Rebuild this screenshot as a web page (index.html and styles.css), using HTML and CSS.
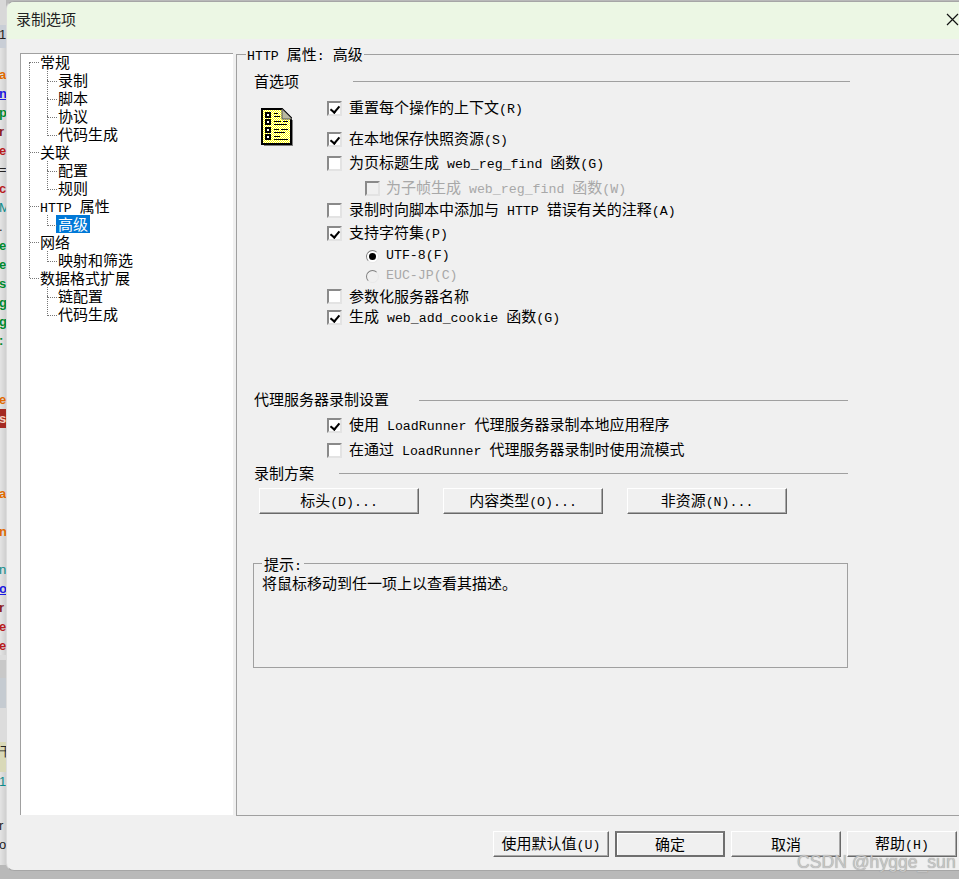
FILE: index.html
```html
<!DOCTYPE html>
<html lang="zh">
<head>
<meta charset="utf-8">
<title>录制选项</title>
<link rel="stylesheet" href="styles.css">
</head>
<body>
<div class="strip">
  <div class="sb sb-top"></div>
  <div class="sb sb-blue"><span class="ch c-dark">1</span></div>
  <div class="sb sp16"></div>
  <div class="ch c-orange">a</div>
  <div class="ch c-blue u">n</div>
  <div class="ch c-green">p</div>
  <div class="ch c-maroon">r</div>
  <div class="ch c-red">e</div>
  <div class="ch c-dark">=</div>
  <div class="ch c-red">c</div>
  <div class="ch c-teal">M</div>
  <div class="ch c-dark">.</div>
  <div class="ch c-green">e</div>
  <div class="ch c-green">e</div>
  <div class="ch c-green">s</div>
  <div class="ch c-green">g</div>
  <div class="ch c-green">g</div>
  <div class="ch c-green">:</div>
  <div class="sb sp40"></div>
  <div class="ch c-orange">e</div>
  <div class="sb sb-red"><span class="ch c-white">s</span></div>
  <div class="sb sp56"></div>
  <div class="ch c-orange">a</div>
  <div class="sb sp19"></div>
  <div class="ch c-orange">n</div>
  <div class="sb sp19"></div>
  <div class="ch c-teal">n</div>
  <div class="ch c-blue u">o</div>
  <div class="ch c-maroon">r</div>
  <div class="ch c-red">e</div>
  <div class="ch c-red">e</div>
  <div class="sb sb-grey"></div>
  <div class="sb sb-steel"></div>
  <div class="sb sb-pale"></div>
  <div class="sb sb-yellow"><span class="ch c-dark">干</span></div>
  <div class="ch c-teal">1</div>
  <div class="sb sp25"></div>
  <div class="ch c-dark">r</div>
  <div class="ch c-dark">o</div>
</div>

<div class="dialog">
  <header class="titlebar">
    <span class="title">录制选项</span>
    <svg class="close" viewBox="0 0 13 13" width="13" height="13"><path d="M1 1 12 12M12 1 1 12" stroke="#111" stroke-width="1.2" fill="none"/></svg>
  </header>

  <div class="content">
    <nav class="tree">
      <div class="node"><div class="label">常规</div>
        <div class="kids">
          <div class="leaf">录制</div><div class="leaf">脚本</div><div class="leaf">协议</div><div class="leaf">代码生成</div>
        </div>
      </div>
      <div class="node"><div class="label">关联</div>
        <div class="kids">
          <div class="leaf">配置</div><div class="leaf">规则</div>
        </div>
      </div>
      <div class="node"><div class="label"><span class="m">HTTP </span>属性</div>
        <div class="kids">
          <div class="leaf"><span class="sel">高级</span></div>
        </div>
      </div>
      <div class="node"><div class="label">网络</div>
        <div class="kids">
          <div class="leaf">映射和筛选</div>
        </div>
      </div>
      <div class="node"><div class="label">数据格式扩展</div>
        <div class="kids">
          <div class="leaf">链配置</div><div class="leaf">代码生成</div>
        </div>
      </div>
    </nav>

    <main class="panel">
      <div class="panel-title"><span class="m">HTTP </span>属性<span class="m">: </span>高级</div>

      <section class="section">
        <div class="head head-pref"><span>首选项</span><i class="rule"></i></div>
        <div class="prefs">
          <svg class="doc" viewBox="0 0 32 38" width="32" height="38">
            <defs>
              <pattern id="dither" width="2" height="2" patternUnits="userSpaceOnUse">
                <rect width="2" height="2" fill="#ffff00"/>
                <rect width="1" height="1" fill="#fff"/>
                <rect x="1" y="1" width="1" height="1" fill="#fff"/>
              </pattern>
            </defs>
            <path d="M1 1H21L30 10V36H1Z" fill="url(#dither)" stroke="#000" stroke-width="2"/>
            <path d="M21 1 31 11H21Z" fill="#b9b9a0" stroke="#555" stroke-width="1"/>
            <path d="M32 12V38H3V37H31V12Z" fill="#808080"/>
            <g fill="#fff" stroke="#000" stroke-width="2">
              <rect x="5" y="5" width="4" height="4"/>
              <rect x="5" y="12" width="4" height="4"/>
              <rect x="5" y="20" width="4" height="4"/>
              <rect x="5" y="27" width="4" height="4"/>
            </g>
            <g stroke="#000" stroke-width="1" fill="none">
              <path d="M13 5.500H17M13 8.500H19M13 13.500H20M22 13.500H27M13 16.500H26M13 21.500H18M20 21.500H27M13 24.500H24M13 28.500H19M13 31.500H27"/>
            </g>
          </svg>
          <div class="opts">
            <label class="row"><i class="box on"></i><span>重置每个操作的上下文<span class="m">(R)</span></span></label>
            <label class="row m11"><i class="box on"></i><span>在本地保存快照资源<span class="m">(S)</span></span></label>
            <label class="row m4"><i class="box"></i><span>为页标题生成<span class="m"> web_reg_find </span>函数<span class="m">(G)</span></span></label>
            <label class="row m5 sub off"><i class="box"></i><span>为子帧生成<span class="m"> web_reg_find </span>函数<span class="m">(W)</span></span></label>
            <label class="row m2"><i class="box"></i><span>录制时向脚本中添加与<span class="m"> HTTP </span>错误有关的注释<span class="m">(A)</span></span></label>
            <label class="row m3"><i class="box on"></i><span>支持字符集<span class="m">(P)</span></span></label>
            <label class="row m3 sub"><i class="radio on"></i><span class="m">UTF-8(F)</span></label>
            <label class="row sub off"><i class="radio"></i><span class="m">EUC-JP(C)</span></label>
            <label class="row"><i class="box"></i><span>参数化服务器名称</span></label>
            <label class="row m1"><i class="box on"></i><span>生成<span class="m"> web_add_cookie </span>函数<span class="m">(G)</span></span></label>
          </div>
        </div>
      </section>

      <section class="section proxy">
        <div class="head head-proxy"><span>代理服务器录制设置</span><i class="rule"></i></div>
        <div class="opts proxy-opts">
          <label class="row"><i class="box on"></i><span>使用<span class="m"> LoadRunner </span>代理服务器录制本地应用程序</span></label>
          <label class="row m5"><i class="box"></i><span>在通过<span class="m"> LoadRunner </span>代理服务器录制时使用流模式</span></label>
        </div>
      </section>

      <section class="section scheme">
        <div class="head head-scheme"><span>录制方案</span><i class="rule"></i></div>
        <div class="btns">
          <button class="btn">标头<span class="m">(D)...</span></button>
          <button class="btn">内容类型<span class="m">(O)...</span></button>
          <button class="btn">非资源<span class="m">(N)...</span></button>
        </div>
      </section>

      <section class="hint">
        <span class="hint-legend">提示<span class="m">:</span></span>
        <p class="hint-text">将鼠标移动到任一项上以查看其描述。</p>
      </section>
    </main>
  </div>

  <footer class="footer">
    <button class="fbtn wide">使用默认值<span class="m">(U)</span></button>
    <button class="fbtn default">确定</button>
    <button class="fbtn">取消</button>
    <button class="fbtn">帮助<span class="m">(H)</span></button>
  </footer>
</div>
<div class="watermark">CSDN @hygge_sun</div>
</body>
</html>
```
FILE: styles.css
```css
* { box-sizing: border-box; }
html, body { margin: 0; height: 879px; overflow: hidden; }
body {
  display: flex;
  align-items: flex-start;
  background: #b9b9b9;
  font-family: "Noto Sans CJK SC", "Liberation Sans", sans-serif;
  font-size: 15px;
  line-height: 18px;
  color: #000;
}
.m { font-family: "Liberation Mono", monospace; font-size: 13.25px; white-space: pre; }

/* Background sliver of the window behind the dialog */
.strip {
  flex: none;
  width: 6px;
  height: 865px;
  background: linear-gradient(90deg, #e4e4e4, #cfcfcf);
  overflow: hidden;
  font-family: "Liberation Sans", sans-serif;
}
.sb { height: 19px; }
.sb-top { height: 25px; background: #d8d8d8; }
.sb-blue { height: 23px; background: #c9ced6; }
.sp16 { height: 17px; }
.sp19 { height: 19px; }
.sp25 { height: 25px; }
.sp40 { height: 40px; }
.sp56 { height: 56px; }
.ch { display: block; height: 19px; margin-left: -1px; font-size: 13px; line-height: 19px; font-weight: 700; white-space: nowrap; }
.c-orange { color: #e06a00; }
.c-blue { color: #1a1ae0; }
.c-green { color: #008a2e; }
.c-maroon { color: #8a1c1c; }
.c-red { color: #b81c1c; }
.c-dark { color: #222; font-weight: 400; }
.c-teal { color: #0b8a8a; font-weight: 400; }
.c-white { color: #f5d0c0; }
.u { text-decoration: underline; }
.sb-red { background: #a52a22; }
.sb-grey { height: 23px; background: linear-gradient(#dcdcdc 20%, #c8c8c8 20%); }
.sb-steel { height: 30px; background: #c5cbd1; }
.sb-pale { height: 34px; background: #dcdcdc; }
.sb-yellow { height: 30px; background: #d9d9b8; }

/* Dialog */
.dialog {
  flex: none;
  width: 960px;
  height: 870px;
  margin-top: 1px;
  display: flex;
  flex-direction: column;
  background: #f0f0f0;
  border: 1px solid #a6a6a6;
  border-right: 0;
  border-left-color: #dcdcdc;
  border-radius: 8px 0 0 8px;
  overflow: hidden;
}
.titlebar {
  flex: none;
  height: 37px;
  padding-left: 9px;
  display: flex;
  align-items: center;
  justify-content: space-between;
  background: #ecf7e4;
  color: #222;
}
.title { margin-top: -3px; }
.close { margin-right: 7px; margin-top: -2px; }

.content {
  flex: none;
  height: 776px;
  display: flex;
  padding: 14px 0 0 13px;
}

/* Tree */
.tree {
  position: relative;
  flex: none;
  width: 213px;
  height: 762px;
  padding: 0 0 0 19px;
  background: #fff;
  border-top: 1px solid #a0a0a0;
  border-left: 1px solid #a0a0a0;
}
.tree::before {
  content: "";
  position: absolute;
  left: 8px;
  top: 8px;
  height: 216px;
  border-left: 1px dotted #777;
}
.node:first-child { margin-top: -1px; }
.label, .leaf { position: relative; height: 18px; white-space: nowrap; }
.label::before {
  content: "";
  position: absolute;
  left: -10px;
  top: 9px;
  width: 9px;
  border-top: 1px dotted #777;
}
.kids { padding-left: 18px; }
.leaf::before {
  content: "";
  position: absolute;
  left: -11px;
  top: -9px;
  width: 9px;
  height: 19px;
  border-left: 1px dotted #777;
  border-bottom: 1px dotted #777;
}
.leaf:first-child::before { top: 0; height: 10px; }
.sel { display: inline-block; height: 18px; margin-left: -2px; padding: 0 2px; background: #0078d7; color: #fff; }

/* Right panel */
.panel {
  flex: none;
  width: 723px;
  height: 762px;
  margin: 1px 0 0 3px;
  border-top: 1px solid #a0a0a0;
  border-left: 1px solid #a0a0a0;
  border-bottom: 1px solid #a0a0a0;
}
.panel-title {
  width: fit-content;
  height: 18px;
  margin: -10px 0 9px 9px;
  padding: 0 1px;
  background: #f0f0f0;
}
.section { width: 596px; margin-left: 17px; }
.head { display: flex; align-items: center; height: 18px; }
.rule { flex: 1; height: 1px; background: #a0a0a0; }
.head-pref .rule { margin-left: 54px; }
.head-proxy .rule { margin: 3px 2px 0 30px; }
.head-scheme .rule { margin: 1px 2px 0 25px; }

.prefs { display: flex; align-items: flex-start; margin-top: 8px; }
.doc { flex: none; margin: 10px 0 0 7px; }
.opts { margin-left: 34px; }
.proxy { margin-top: 63px; }
.proxy-opts { margin: 7px 0 0 73px; }
.scheme { margin-top: 4px; }

.row { display: flex; align-items: center; height: 20px; white-space: nowrap; }
.m1 { margin-top: 1px; }
.m2 { margin-top: 2px; }
.m3 { margin-top: 3px; }
.m4 { margin-top: 4px; }
.m5 { margin-top: 5px; }
.m11 { margin-top: 11px; }
.sub { margin-left: 38px; }
.off { color: #a8a8a8; }

.box {
  position: relative;
  flex: none;
  width: 15px;
  height: 15px;
  margin-right: 7px;
  background: #fff;
  border: 2px solid;
  border-color: #8a8a8a #e3e3e3 #e3e3e3 #8a8a8a;
}
.sub .box { margin-right: 6px; }
.off .box { background: #f0f0f0; }
.box.on::after {
  content: "";
  position: absolute;
  left: 3px;
  top: 1px;
  width: 4px;
  height: 7px;
  border: solid #000;
  border-width: 0 2px 2px 0;
  transform: rotate(40deg);
}
.radio {
  position: relative;
  flex: none;
  width: 13px;
  height: 13px;
  margin: 0 7px 0 1px;
  border-radius: 50%;
  background: #fff;
  border: 1px solid;
  border-color: #808080 #e8e8e8 #e8e8e8 #808080;
}
.off .radio { background: #f0f0f0; }
.radio.on::after {
  content: "";
  position: absolute;
  left: 2px;
  top: 2px;
  width: 7px;
  height: 7px;
  border-radius: 50%;
  background: #000;
}

/* Buttons */
.btns { display: flex; gap: 24px; margin: 6px 0 0 5px; }
.btn, .fbtn {
  padding: 0;
  font: inherit;
  color: #000;
  background: #f0f0f0;
  border: 1px solid;
  border-color: #fff #696969 #696969 #fff;
  box-shadow: inset -1px -1px 0 #a8a8a8;
  white-space: nowrap;
}
.btn { width: 160px; height: 26px; }

/* Hint */
.hint {
  position: relative;
  width: 595px;
  height: 105px;
  margin: 49px 0 0 16px;
  padding: 10px 0 0 8px;
  border: 1px solid #a0a0a0;
}
.hint-legend {
  position: absolute;
  left: 8px;
  top: -9px;
  padding: 0 2px;
  background: #f0f0f0;
}
.hint-text { margin: 0; }

/* Footer */
.footer {
  flex: 1;
  display: flex;
  align-items: flex-start;
  gap: 6px;
  padding: 16px 0 0 486px;
}
.fbtn { width: 110px; height: 26px; }
.fbtn.wide { width: 116px; }
.fbtn.default {
  border: 2px solid #6e6e6e;
  border-top-color: #7a7a7a;
  box-shadow: inset 1px 1px 0 #fff;
}

.watermark {
  position: absolute;
  left: 797px;
  top: 851px;
  font-family: "Liberation Sans", sans-serif;
  font-size: 17.6px;
  line-height: 22px;
  color: rgba(205, 205, 205, .9);
  text-shadow: 0 0 1px #808080;
  white-space: nowrap;
}
```
